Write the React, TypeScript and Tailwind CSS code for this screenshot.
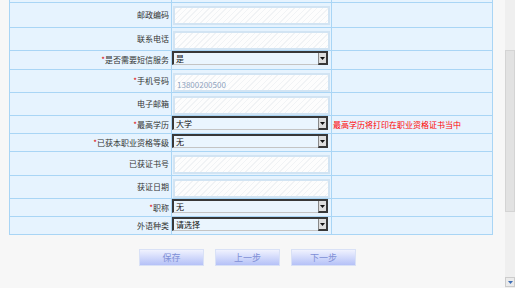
import React from "react";

type Row = {
  label: string;
  required?: boolean;
  h: string;
  kind: "input" | "select";
  value?: string;
  note?: string;
};

const rows: Row[] = [
  { label: "邮政编码", h: "h-[25px]", kind: "input" },
  { label: "联系电话", h: "h-[23px]", kind: "input" },
  { label: "是否需要短信服务", required: true, h: "h-[19px]", kind: "select", value: "是" },
  { label: "手机号码", required: true, h: "h-[23px]", kind: "input", value: "13800200500" },
  { label: "电子邮箱", h: "h-[23px]", kind: "input" },
  { label: "最高学历", required: true, h: "h-[18px]", kind: "select", value: "大学", note: "最高学历将打印在职业资格证书当中" },
  { label: "已获本职业资格等级", required: true, h: "h-[18px]", kind: "select", value: "无" },
  { label: "已获证书号", h: "h-[24px]", kind: "input" },
  { label: "获证日期", h: "h-[23px]", kind: "input" },
  { label: "职称", required: true, h: "h-[18px]", kind: "select", value: "无" },
  { label: "外语种类", h: "h-[18px]", kind: "select", value: "请选择" },
];

function TextBox({ value }: { value?: string }) {
  return (
    <div className="ml-px mt-[3px] h-[19px] w-[157px] border-2 border-[#d2e4f3] bg-[repeating-linear-gradient(135deg,#f1f3f5_0px,#f1f3f5_1px,#fdfdfd_1px,#fdfdfd_4px)] flex items-end pl-[2px] pb-[1px]">
      {value && <span className="text-[8px] leading-none text-[#8fa3bd]">{value}</span>}
    </div>
  );
}

function SelectBox({ value }: { value?: string }) {
  return (
    <div className="flex h-[14px] w-[156px] border-t-2 border-l-2 border-[#383838] border-b border-b-[#c4c4c4] bg-[#eaf5fe]">
      <span className="flex-1 pl-[2px] text-[8px] leading-[11px] text-[#111]">{value}</span>
      <div className="flex h-[12px] w-[10px] items-center justify-center border-r-2 border-b-2 border-l border-[#383838] border-l-[#888] bg-[#dedede]">
        <svg width="5" height="3" viewBox="0 0 5 3">
          <path d="M0 0h5L2.5 3z" fill="#111" />
        </svg>
      </div>
    </div>
  );
}

export default function App() {
  return (
    <div
      className="flex h-[288px] w-[515px] overflow-hidden bg-[#f7f7f7] text-[#333]"
      style={{ fontFamily: '"Noto Sans CJK SC", "Liberation Sans", sans-serif' }}
    >
      <div className="flex w-[505px] flex-col">
        {/* form table */}
        <div className="ml-[9px] w-[484px] border-l border-r border-[#a9d5f5] bg-[#e6f3fe]">
          <div className="grid h-[3px] grid-cols-[162px_160px_160px] border-b border-[#a9d5f5]">
            <div className="border-r border-[#a9d5f5]" />
            <div className="border-r border-[#a9d5f5]" />
            <div />
          </div>
          {rows.map((r) => (
            <div
              key={r.label}
              className={`grid grid-cols-[162px_160px_160px] border-b border-[#a9d5f5] ${r.h}`}
            >
              <div className="flex items-center justify-end border-r border-[#a9d5f5] pr-[2px] text-[8px] leading-none">
                {r.required && <span className="text-[#e00000]">*</span>}
                <span>{r.label}</span>
              </div>
              <div className="border-r border-[#a9d5f5]">
                {r.kind === "input" ? <TextBox value={r.value} /> : <SelectBox value={r.value} />}
              </div>
              <div className="flex items-center pl-[1px]">
                {r.note && <span className="text-[8px] leading-none text-[#ff0000]">{r.note}</span>}
              </div>
            </div>
          ))}
        </div>

        {/* buttons */}
        <div className="mt-[14px] flex gap-[11px] pl-[139px]">
          {["保存", "上一步", "下一步"].map((b) => (
            <button
              key={b}
              className="flex h-[17px] w-[65px] items-center justify-center border border-[#d9e1f6] bg-gradient-to-b from-[#f0f2fe] to-[#b5c1f7] text-[9px] leading-none text-[#7f8fd6]"
            >
              {b}
            </button>
          ))}
        </div>
      </div>

      {/* scrollbar */}
      <div className="flex w-[10px] flex-col bg-[#efefef]">
        <div className="h-[50px]" />
        <div className="h-[162px] border border-[#d4d4d4] bg-[#e2e2e2]" />
        <div className="flex-1" />
        <div className="mb-[1px] flex h-[10px] items-center justify-center border border-[#cccccc] bg-[#ebebeb]">
          <svg width="5" height="3" viewBox="0 0 5 3">
            <path d="M0 0h5L2.5 3z" fill="#3d6db5" />
          </svg>
        </div>
      </div>
    </div>
  );
}
